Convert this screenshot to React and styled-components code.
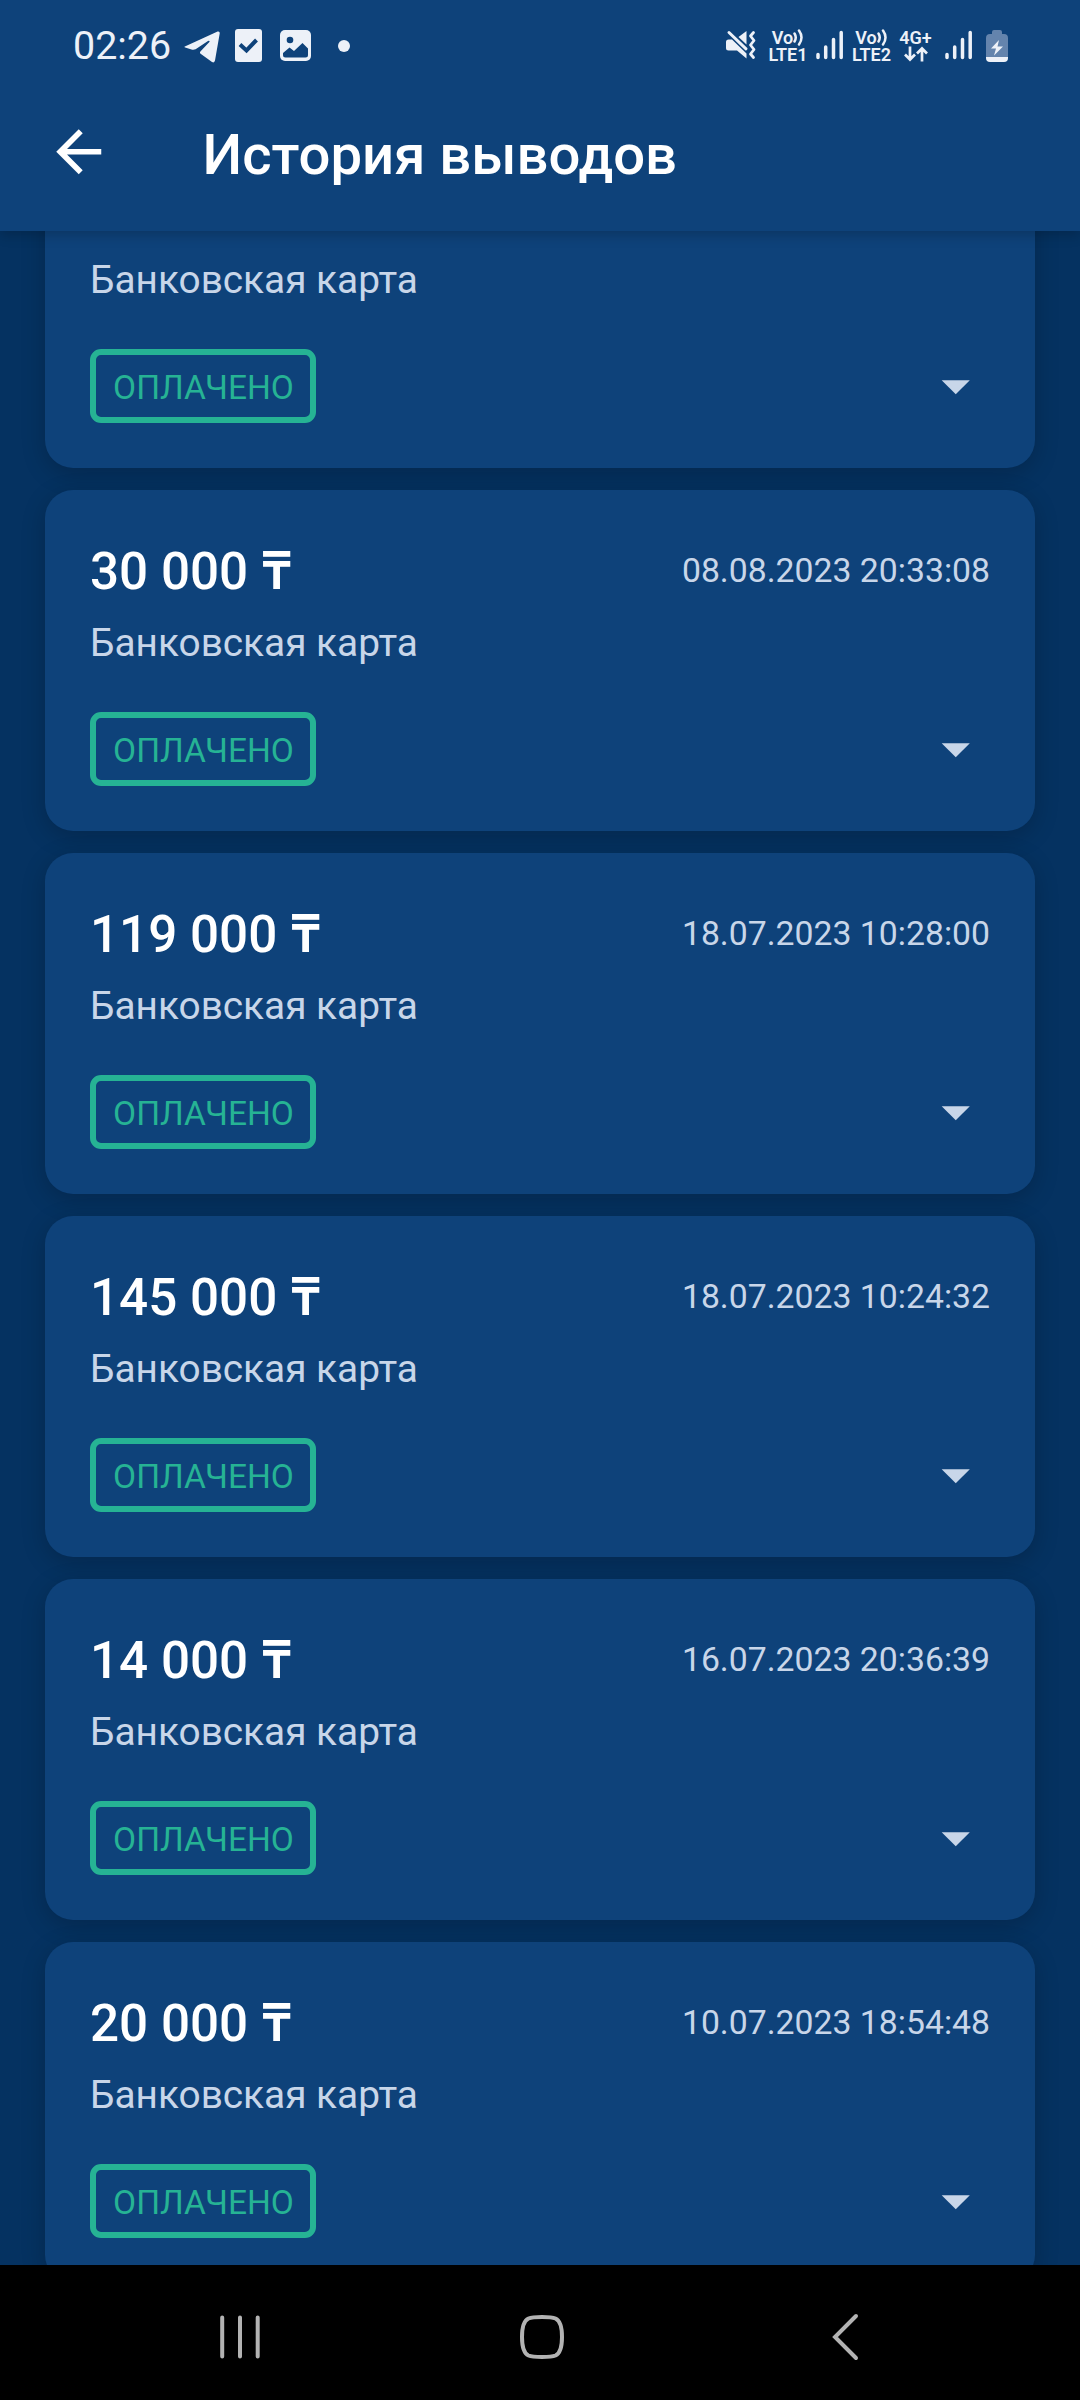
import React from "react";
import styled, { createGlobalStyle } from "styled-components";

const Color = {
    background: "#053261",
    surface: "#0e427a",
    text: "#c8d6e9",
    green: "#26b394",
    status: "#edf1f8",
    nav: "#b3b3b3",
};

// the first card is scrolled under the header, only its lower half is on screen
const payouts = [
    { id: 1 },
    { id: 2, amount: "30 000", date: "08.08.2023 20:33:08" },
    { id: 3, amount: "119 000", date: "18.07.2023 10:28:00" },
    { id: 4, amount: "145 000", date: "18.07.2023 10:24:32" },
    { id: 5, amount: "14 000", date: "16.07.2023 20:36:39" },
    { id: 6, amount: "20 000", date: "10.07.2023 18:54:48" },
];

const Signal = () => (
    <svg width="28" height="31" viewBox="0 0 28 31" stroke={Color.status} strokeWidth="3.5" strokeLinecap="round">
        <path d="M2 24.5V27.5M9.7 17V27.5M17.5 9.5V27.5M25.2 2.5V27.5" />
    </svg>
);

const VoLte = ({ sim, width }) => (
    <Network $width={width}>
        <NetworkTop>
            Vo
            <svg width="11" height="17" viewBox="0 0 11 17" fill="none" stroke={Color.status} strokeWidth="2.5" strokeLinecap="round">
                <path d="M1.5 4.5Q4 8.5 1.5 12.5M6 1.5Q11 8.5 6 15.5" />
            </svg>
        </NetworkTop>
        <NetworkBottom>LTE{sim}</NetworkBottom>
    </Network>
);

const StatusBar = () => (
    <Status>
        <Clock>02:26</Clock>
        <StatusIcons>
            <svg width="36" height="34" viewBox="0 -2 36 34" fill={Color.status}>
                <path d="M1.4 15.2L33.6.6Q36 0 35.7 2.6L31 29.6Q30.4 32.3 28 31L16.6 22.8Q15.3 21.5 16.6 20.2L25.6 10.8Q25.7 9.3 24 10L11.6 18.2Q9.5 19 7.5 18.4L1.2 16.6Q-.4 15.9 1.4 15.2Z" />
            </svg>
            <svg width="27" height="33" viewBox="0 0 27 33">
                <rect width="27" height="33" rx="3" fill={Color.status} />
                <path d="M5 15.5L11.5 21.5L21.5 11" fill="none" stroke={Color.surface} strokeWidth="4" />
            </svg>
            <svg width="31" height="31" viewBox="0 0 31 31">
                <rect width="31" height="31" rx="5" fill={Color.status} />
                <circle cx="10" cy="10" r="3.3" fill={Color.surface} />
                <path d="M3 23L9.5 17.5L14 21L22.5 13L28 18.5V25Q28 27.5 25.5 27.5H5.5Q3 27.5 3 25Z" fill={Color.surface} />
            </svg>
            <Dot />
        </StatusIcons>
        <SystemIcons>
            <svg width="31" height="31" viewBox="0 0 31 31" fill={Color.status}>
                <path d="M0 12Q0 9.5 2.5 9.5H6L20.5 23.5V28.5L11 20.5H2.5Q0 20.5 0 18Z" />
                <path d="M20.5 1V14.5L12.5 7Z" />
                <path d="M3 2.5L20 18.8" stroke={Color.status} strokeWidth="3" strokeLinecap="round" />
                <path d="M27.5 2.5L24.5 6L28 10.5L24.5 15L28 19.5L24.5 24L27.5 27.5" fill="none" stroke={Color.status} strokeWidth="2.8" strokeLinecap="round" strokeLinejoin="round" />
            </svg>
            <VoLte sim="1" width="38px" />
            <Signal />
            <VoLte sim="2" width="39px" />
            <Network $width="33px">
                <NetworkTop>4G+</NetworkTop>
                <svg width="24" height="16" viewBox="0 0 24 16" fill="none" stroke={Color.status} strokeWidth="2.7">
                    <path d="M6 .5V14M1 8.5L6 13.5L11 8.5M18 15.5V2M13 7.5L18 2.5L23 7.5" />
                </svg>
            </Network>
            <Signal />
            <svg width="22" height="32" viewBox="0 0 22 32">
                <path d="M6 4V2Q6 0 8 0H14Q16 0 16 2V4H18Q22 4 22 8V27H0V8Q0 4 4 4Z" fill="#6484ad" />
                <path d="M0 27H22V28Q22 32 18 32H4Q0 32 0 28Z" fill={Color.status} />
                <path d="M13 10L5 18.5H10L8 25.5L17 16.5H11.5Z" fill={Color.status} />
            </svg>
        </SystemIcons>
    </Status>
);

const PayoutCard = ({ amount, date }) => (
    <Card>
        <CardTop>
            {amount && <Amount>{amount} <Currency>₸</Currency></Amount>}
            {date && <PayoutDate>{date}</PayoutDate>}
        </CardTop>
        <Method>Банковская карта</Method>
        <CardBottom>
            <Badge>ОПЛАЧЕНО</Badge>
            <Caret viewBox="0 0 24 24">
                <path d="M7 10l5 5 5-5z" />
            </Caret>
        </CardBottom>
    </Card>
);

export default function App() {
    return (
        <Screen>
            <GlobalStyle />
            <Header>
                <StatusBar />
                <Toolbar>
                    <svg width="67.5" height="67.5" viewBox="0 0 24 24" fill="#fff">
                        <path d="M20 11H7.83l5.59-5.59L12 4l-8 8 8 8 1.41-1.41L7.83 13H20v-2z" />
                    </svg>
                    <Title>История выводов</Title>
                </Toolbar>
            </Header>
            <List>
                {payouts.map(item => (
                    <PayoutCard key={item.id} amount={item.amount} date={item.date} />
                ))}
            </List>
            <NavBar>
                <svg width="42" height="46" viewBox="0 0 42 46" stroke={Color.nav} strokeWidth="4" strokeLinecap="round">
                    <path d="M3.2 3.5V42.5M21 3.5V42.5M38.7 3.5V42.5" />
                </svg>
                <svg width="44" height="46" viewBox="0 0 44 46" fill="none" stroke={Color.nav} strokeWidth="4">
                    <path d="M22 3Q32 3 35.5 4.5Q42 7.5 42 23Q42 38.5 35.5 41.5Q32 43 22 43Q12 43 8.5 41.5Q2 38.5 2 23Q2 7.5 8.5 4.5Q12 3 22 3Z" />
                </svg>
                <svg width="44" height="48" viewBox="-8 0 44 48" fill="none" stroke={Color.nav} strokeWidth="4" strokeLinecap="round">
                    <path d="M25 3L4 24L25 45" />
                </svg>
            </NavBar>
        </Screen>
    );
}

const GlobalStyle = createGlobalStyle`
    body {
        margin: 0;
        background: ${Color.background};
        font-family: Roboto, sans-serif;
    }
    svg {
        display: block;
        flex: none;
    }
`
const Screen = styled.div`
    display: flex;
    flex-direction: column;
    width: 1080px;
    height: 2400px;
    overflow: hidden;
    background: ${Color.background};
`
const Header = styled.header`
    position: relative;
    z-index: 1;
    flex: none;
    height: 231px;
    background: ${Color.surface};
    box-shadow: 0 4px 12px rgba(0, 0, 0, 0.2);
`
const Status = styled.div`
    display: flex;
    align-items: center;
    height: 91px;
    padding: 0 72px 0 73px;
    box-sizing: border-box;
    color: ${Color.status};
`
const Clock = styled.div`
    width: 111px;
    font-size: 39.4px;
    line-height: 88px;
    white-space: nowrap;
`
const StatusIcons = styled.div`
    display: grid;
    grid-template-columns: 51px 45px 58px 12px;
    align-items: center;
`
const Dot = styled.i`
    width: 12px;
    height: 12px;
    border-radius: 50%;
    background: ${Color.status};
`
const SystemIcons = styled.div`
    display: grid;
    grid-template-columns: 43px 47px 36px 47px 46px 41px 22px;
    align-items: center;
    margin-left: auto;
`
const Network = styled.div`
    display: flex;
    flex-direction: column;
    align-items: center;
    width: ${props => props.$width};
    height: 33px;
    font-size: 18px;
    font-weight: 600;
`
const NetworkTop = styled.div`
    display: flex;
    align-items: center;
    height: 17px;
    line-height: 17px;
`
const NetworkBottom = styled.div`
    line-height: 17px;
`
const Toolbar = styled.div`
    display: flex;
    align-items: center;
    gap: 90px;
    height: 122px;
    padding-left: 45px;
`
const Title = styled.h1`
    margin: 5px 0 0;
    font-size: 56.25px;
    font-weight: 500;
    line-height: 66px;
    color: #fff;
    white-space: nowrap;
`
const List = styled.main`
    display: flex;
    flex: 1;
    flex-direction: column;
    justify-content: flex-end;
    gap: 22px;
    min-height: 0;
    padding: 0 45px;
    margin-bottom: -18px;
`
const Card = styled.section`
    flex: none;
    height: 341px;
    padding: 45px;
    box-sizing: border-box;
    border-radius: 28px;
    background: ${Color.surface};
    box-shadow: 0 6px 24px rgba(0, 0, 0, 0.2);
`
const CardTop = styled.div`
    display: flex;
    justify-content: space-between;
    height: 73px;
    white-space: nowrap;
`
const Amount = styled.div`
    font-size: 51.2px;
    font-weight: 500;
    line-height: 73px;
    color: #fff;
`
const Currency = styled.span`
    margin-left: 1px;
    font-family: "Noto Sans", sans-serif;
    font-size: 52px;
    font-weight: 600;
    line-height: 1;
`
const PayoutDate = styled.div`
    font-size: 33.75px;
    line-height: 71px;
    color: ${Color.text};
`
const Method = styled.div`
    font-size: 38.8px;
    line-height: 69px;
    color: ${Color.text};
`
const CardBottom = styled.div`
    display: flex;
    align-items: center;
    justify-content: space-between;
    height: 74px;
    margin-top: 35px;
`
const Badge = styled.div`
    width: 226px;
    height: 74px;
    padding: 2px 0 0 1px;
    box-sizing: border-box;
    border: 6px solid ${Color.green};
    border-radius: 11px;
    font-size: 33.5px;
    line-height: 61px;
    text-align: center;
    color: ${Color.green};
`
const Caret = styled.svg`
    width: 67.5px;
    height: 67.5px;
    margin-right: 0.5px;
    fill: ${Color.text};
`
const NavBar = styled.nav`
    position: relative;
    z-index: 1;
    display: flex;
    flex: none;
    align-items: center;
    gap: 259px;
    height: 135px;
    padding: 9px 0 0 219px;
    box-sizing: border-box;
    background: #000;
`
